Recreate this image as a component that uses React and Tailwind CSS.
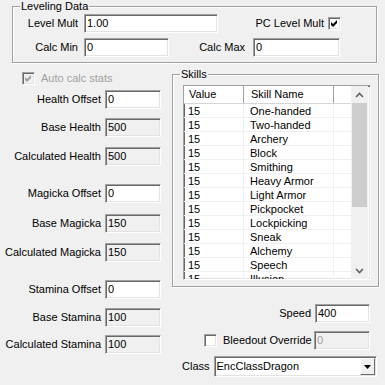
import React from 'react'

const sunken =
    'border border-t-[#a0a0a0] border-l-[#a0a0a0] border-b-white border-r-white shadow-[inset_1px_1px_0_#696969,inset_-1px_-1px_0_#e3e3e3]'

const skills = [
    'One-handed',
    'Two-handed',
    'Archery',
    'Block',
    'Smithing',
    'Heavy Armor',
    'Light Armor',
    'Pickpocket',
    'Lockpicking',
    'Sneak',
    'Alchemy',
    'Speech',
    'Illusion'
]

const Edit = ({ className = '', value, readOnly, disabled }) => (
    <div
        className={`${sunken} h-[19px] pl-[2px] leading-[17px] overflow-hidden ${
            readOnly || disabled ? 'bg-[#f0f0f0]' : 'bg-white'
        } ${disabled ? 'text-[#a0a0a0]' : 'text-black'} ${className}`}>
        {value}
    </div>
)

const Check = ({ checked, disabled }) => (
    <div
        className={`${sunken} w-[13px] h-[13px] shrink-0 flex items-center justify-center ${
            disabled ? 'bg-[#f0f0f0]' : 'bg-white'
        }`}>
        {checked && (
            <svg width="7" height="7" viewBox="0 0 7 7">
                <polygon
                    points="0,2 2,4 6,0 6,3 2,7 0,5"
                    fill={disabled ? '#a0a0a0' : '#000'}
                />
            </svg>
        )}
    </div>
)

const GroupBox = ({ title, className, titleClass, children }) => (
    <div
        className={`relative border border-[#a0a0a0] shadow-[inset_1px_1px_0_#fff,1px_1px_0_#fff] ${className}`}>
        <span
            className={`absolute -top-[7px] px-[1px] bg-[#f0f0f0] leading-[13px] ${titleClass}`}>
            {title}
        </span>
        {children}
    </div>
)

const StatRow = ({ label, value, readOnly, className }) => (
    <div className={`flex items-center ${className}`}>
        <div className="w-[101px] text-right whitespace-nowrap">{label}</div>
        <Edit className="ml-[4px] w-[56px]" value={value} readOnly={readOnly} />
    </div>
)

const Chevron = ({ up }) => (
    <svg width="9" height="6" viewBox="0 0 9 6">
        <path
            d={up ? 'M1 5 L4.5 1.5 L8 5' : 'M1 1 L4.5 4.5 L8 1'}
            fill="none"
            stroke="#606060"
            strokeWidth="1.6"
        />
    </svg>
)

const SkillList = () => (
    <div className={`${sunken} w-[188px] h-[195px] bg-white flex ml-[10px] mt-[10px] overflow-hidden`}>
        <div className="w-[167px] flex flex-col">
            {/* header */}
            <div className="flex h-[18px] shrink-0 bg-white border-b border-[#d5d5d5]">
                <div className="w-[60px] pl-[5px] leading-[17px] border-r border-[#a0a0a0]">Value</div>
                <div className="w-[90px] pl-[7px] leading-[17px] border-r border-[#a0a0a0]">Skill Name</div>
                <div className="flex-1" />
            </div>
            <div className="flex-1 overflow-hidden">
                {skills.map((s) => (
                    <div key={s} className="flex h-[14px] border-b border-[#f0f0f0]">
                        <div className="w-[60px] pl-[4px] leading-[14px] border-r border-[#f0f0f0]">15</div>
                        <div className="w-[90px] pl-[6px] leading-[14px] border-r border-[#f0f0f0]">{s}</div>
                        <div className="flex-1" />
                    </div>
                ))}
            </div>
        </div>
        {/* scrollbar */}
        <div className="w-[17px] flex flex-col bg-[#f0f0f0]">
            <div className="h-[17px] flex items-center justify-center">
                <Chevron up />
            </div>
            <div className="h-[104px] mx-[1px] bg-[#cdcdcd]" />
            <div className="flex-1" />
            <div className="h-[17px] flex items-center justify-center">
                <Chevron />
            </div>
        </div>
    </div>
)

export default function App() {
    return (
        <div className="w-[385px] h-[385px] bg-[#f0f0f0] text-black text-[11px] font-['Liberation_Sans',Arial,sans-serif] flex flex-col overflow-hidden">
            {/* Leveling Data */}
            <GroupBox
                title="Leveling Data"
                titleClass="left-[7px]"
                className="ml-[12px] mt-[6px] w-[365px] h-[57px] shrink-0">
                <div className="flex items-center mt-[7px]">
                    <div className="w-[65px] text-right">Level Mult</div>
                    <Edit className="ml-[6px] w-[134px]" value="1.00" />
                    <div className="ml-auto mr-[35px] flex items-center">
                        <span>PC Level Mult</span>
                        <div className="ml-[4px]">
                            <Check checked />
                        </div>
                    </div>
                </div>
                <div className="flex items-center mt-[5px]">
                    <div className="w-[65px] text-right">Calc Min</div>
                    <Edit className="ml-[6px] w-[85px]" value="0" />
                    <div className="w-[76px] text-right">Calc Max</div>
                    <Edit className="ml-[8px] w-[87px]" value="0" />
                </div>
            </GroupBox>

            <div className="flex">
                {/* left column */}
                <div className="w-[172px] flex flex-col shrink-0">
                    <div className="flex items-center mt-[9px] ml-[22px]">
                        <Check checked disabled />
                        <span className="ml-[6px] text-[#a0a0a0] leading-[13px]">Auto calc stats</span>
                    </div>
                    <StatRow className="mt-[5px]" label="Health Offset" value="0" />
                    <StatRow className="mt-[9px]" label="Base Health" value="500" readOnly />
                    <StatRow className="mt-[10px]" label="Calculated Health" value="500" readOnly />
                    <StatRow className="mt-[18px]" label="Magicka Offset" value="0" />
                    <StatRow className="mt-[11px]" label="Base Magicka" value="150" readOnly />
                    <StatRow className="mt-[10px]" label="Calculated Magicka" value="150" readOnly />
                    <StatRow className="mt-[18px]" label="Stamina Offset" value="0" />
                    <StatRow className="mt-[9px]" label="Base Stamina" value="100" readOnly />
                    <StatRow className="mt-[8px]" label="Calculated Stamina" value="100" readOnly />
                </div>

                {/* right column */}
                <div className="flex-1 flex flex-col">
                    <GroupBox
                        title="Skills"
                        titleClass="left-[7px]"
                        className="mt-[11px] w-[207px] h-[213px] shrink-0">
                        <SkillList />
                    </GroupBox>

                    <div className="flex items-center justify-end mr-[15px] mt-[17px]">
                        <span className="mr-[4px]">Speed</span>
                        <Edit className="w-[55px]" value="400" />
                    </div>

                    <div className="flex items-center mt-[8px] ml-[32px]">
                        <Check />
                        <span className="ml-[6px]">Bleedout Override</span>
                        <Edit className="ml-auto mr-[15px] w-[56px]" value="0" disabled />
                    </div>

                    <div className="flex items-center mt-[6px] ml-[10px]">
                        <span>Class</span>
                        <div className={`${sunken} ml-[4px] w-[163px] h-[21px] bg-white flex items-center`}>
                            <span className="pl-[2px] flex-1">EncClassDragon</span>
                            <div className="w-[15px] h-[17px] mr-[1px] bg-[#f0f0f0] border border-t-white border-l-white border-b-[#696969] border-r-[#696969] flex items-center justify-center">
                                <svg width="7" height="4" viewBox="0 0 7 4">
                                    <polygon points="0,0 7,0 3.5,4" fill="#000" />
                                </svg>
                            </div>
                        </div>
                    </div>
                </div>
            </div>
        </div>
    )
}
